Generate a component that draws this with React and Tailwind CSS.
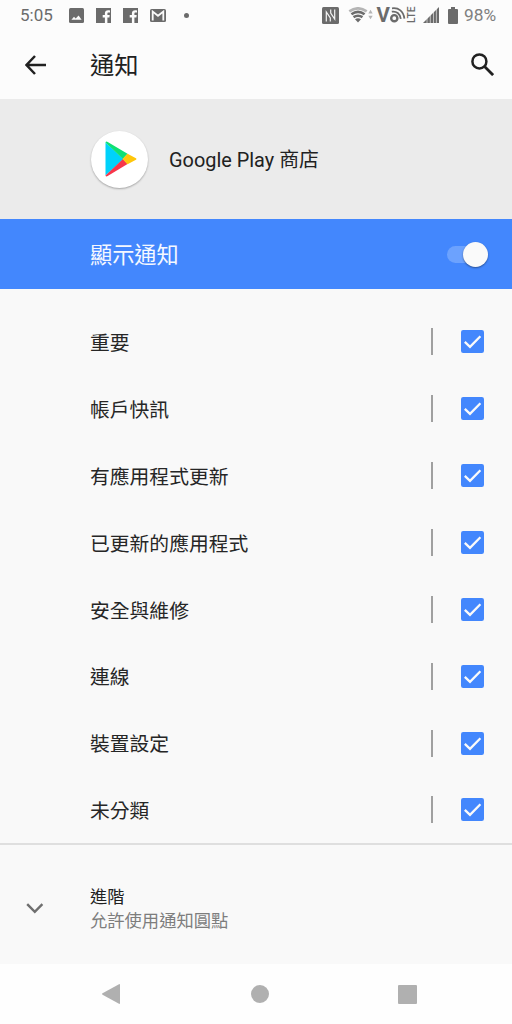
import React from 'react'

const channels = [
  '重要',
  '帳戶快訊',
  '有應用程式更新',
  '已更新的應用程式',
  '安全與維修',
  '連線',
  '裝置設定',
  '未分類',
]

function FacebookIcon() {
  return (
    <svg viewBox="0 0 15 15" className="w-[15px] h-[15px]">
      <path fill="#6b6b6b" d="M0 0h15v15h-3.6V9.4h2l.3-2.3h-2.3V5.7c0-.7.3-1.1 1.1-1.1H14V2.4c-.4-.1-1-.1-1.9-.1-1.9 0-3.2 1-3.2 2.9v1.9H6.7v2.3h2.2V15H0z" />
    </svg>
  )
}

function StatusBar() {
  return (
    <div className="flex h-[30px] items-center pl-5 pr-[15px] text-[17px] leading-none text-[#6b6b6b]">
      <span className="w-[34px] whitespace-nowrap pt-px">5:05</span>
      <svg viewBox="0 0 15 15" className="ml-[15px] w-[15px] h-[15px]">
        <rect width="15" height="15" rx="1.5" fill="#6b6b6b" />
        <path d="M2.4 11.8 5 8.8l1.7 1.8L9.6 7.4l3 4.4z" fill="#fafafa" />
      </svg>
      <div className="ml-3"><FacebookIcon /></div>
      <div className="ml-3"><FacebookIcon /></div>
      <svg viewBox="0 0 16 13" className="ml-3 w-4 h-[13px]">
        <rect width="16" height="13" rx="1.5" fill="#6b6b6b" />
        <path d="M2.7 11.5V2.6L8 6.8l5.3-4.2v8.9" fill="none" stroke="#fafafa" strokeWidth="1.8" />
      </svg>
      <div className="ml-[17.5px] size-[5px] rounded-full bg-[#6b6b6b]" />

      <div className="ml-auto flex items-center">
        {/* NFC */}
        <svg viewBox="0 0 17 17" className="w-[17px] h-[17px]">
          <rect width="17" height="17" rx="1.5" fill="#6b6b6b" />
          <path d="M4.3 14.5V5l4 6v3.5M12.7 2.5V12l-4-6V2.5" fill="none" stroke="#f4f4f4" strokeWidth="1.2" />
        </svg>
        {/* Wifi with traffic arrows */}
        <svg viewBox="0 0 26 16" className="ml-[9px] w-[26px] h-4">
          <path d="M1.3 4.4Q10 -1.8 18.7 4.4" fill="none" stroke="#b5b5b5" strokeWidth="2.6" />
          <path d="M3.4 7.3Q10 2.5 16.6 7.3M5.5 10.2Q10 7.2 14.5 10.2" fill="none" stroke="#6b6b6b" strokeWidth="2.6" />
          <path d="M10 15.5 7 12.2Q10 10.4 13 12.2z" fill="#6b6b6b" />
          <path d="M20.3 6.4 22.5 2.8l2.2 3.6zM20.3 8.7l2.2 3.6 2.2-3.6z" fill="#b5b5b5" />
        </svg>
        {/* VoLTE */}
        <svg viewBox="0 0 40 30" className="ml-[2px] w-10 h-[30px]">
          <text x=".5" y="21.7" fontSize="20.5" fontWeight="700" fill="#6b6b6b">V</text>
          <circle cx="18.3" cy="18.2" r="3.1" fill="none" stroke="#6b6b6b" strokeWidth="2.4" />
          <path d="M15.8 11.7c4.6-.9 8.3 2.1 9 7.2M16 8.3c6.6-1 11.6 3.2 12.4 10.3" fill="none" stroke="#6b6b6b" strokeWidth="1.8" />
          <text transform="translate(38.8 22.9) rotate(-90)" fontSize="10.2" fontWeight="500" textLength="16.5" lengthAdjust="spacingAndGlyphs" fill="#6b6b6b">LTE</text>
        </svg>
        {/* Signal strength */}
        <svg viewBox="0 0 16 16" className="ml-[7px] w-4 h-4">
          <path d="M16 0v16H0z" fill="#6b6b6b" />
          <path d="M4 9v7M7.3 6v10M10.5 3v13M13.4 0v16" stroke="#fafafa" strokeWidth=".6" />
        </svg>
        {/* Battery */}
        <svg viewBox="0 0 10 17" className="ml-[9px] w-[10px] h-[17px]">
          <path d="M3 0h4v2h2q1 0 1 1v13q0 1-1 1H1q-1 0-1-1V3q0-1 1-1h2z" fill="#6b6b6b" />
        </svg>
        <span className="ml-[6px] w-[33px] whitespace-nowrap pt-px text-[17.3px] text-[#808080]">98%</span>
      </div>
    </div>
  )
}

function PlayLogo() {
  return (
    <div className="flex size-[57px] items-center justify-center rounded-full bg-white pl-[3px] shadow-[0_1px_2px_rgba(0,0,0,0.3)]">
      <svg viewBox="0 0 32 36" className="w-8 h-9">
        <path d="M.5 1.5v33L18.5 18z" fill="#00d2fb" />
        <path d="M.5 1.5Q1 0 2.7 1L22.5 12.8 18 18z" fill="#0fe074" />
        <path d="M.5 34.5Q1 36 2.7 35L22.5 23 18 18z" fill="#f7364a" />
        <path d="M22.5 12.8 31 17.2q1 .8 0 1.6L22.5 23.2 17.5 18z" fill="#ffc60a" />
      </svg>
    </div>
  )
}

function ChannelRow({ name }) {
  return (
    <div className="flex h-[66.86px] items-center pl-[90px] pr-[28px] text-[19.8px] text-[#262626]">
      <span className="flex-1 pt-[4px]">{name}</span>
      <div className="h-[27px] w-[1.5px] bg-[#a0a0a0]" />
      <svg viewBox="0 0 23 23" className="ml-[28.5px] w-[23px] h-[23px]">
        <rect width="23" height="23" rx="2.2" fill="#4387fd" />
        <path d="M3.8 11.8 9 16.8 19.4 6.3" fill="none" stroke="#fafafa" strokeWidth="2.3" />
      </svg>
    </div>
  )
}

export default function App() {
  return (
    <div className="flex h-[1024px] w-[512px] flex-col overflow-hidden bg-[#f9f9f9] font-['Roboto','Noto_Sans_CJK_TC',sans-serif] text-[#212121]">
      {/* Top bar */}
      <header className="h-[99px] bg-[#fcfcfc]">
        <StatusBar />
        <div className="flex h-[69px] items-center pl-[25px] pr-[18px]">
          <svg viewBox="0 0 21 20" className="w-[21px] h-5">
            <path d="M10 1 1.5 10l8.5 9M1.5 10H21" fill="none" stroke="#212121" strokeWidth="2.5" />
          </svg>
          <h1 className="ml-11 flex-1 pt-[3px] text-[24.3px]">通知</h1>
          <svg viewBox="0 0 23 23" className="w-[23px] h-[23px]">
            <circle cx="8.4" cy="8.4" r="7" fill="none" stroke="#212121" strokeWidth="2.5" />
            <path d="m13.3 13.3 8.8 8.8" stroke="#212121" strokeWidth="2.8" />
          </svg>
        </div>
      </header>

      {/* App info */}
      <section className="flex h-[120px] items-center bg-[#ebebeb] pl-[91px] text-[19.9px]">
        <PlayLogo />
        <span className="ml-[21px] pt-[4px]">Google Play 商店</span>
      </section>

      {/* Master switch */}
      <section className="flex h-[70px] items-center bg-[#4387fd] pl-[90px] pr-6 text-[22.2px] text-[#f5f8ff]">
        <span className="flex-1 pt-[4px]">顯示通知</span>
        <div className="flex h-[17px] w-[41px] items-center justify-end rounded-full bg-[#6ca2fe]">
          <div className="size-[25px] shrink-0 rounded-full bg-[#fafafa] shadow-[0_1px_2px_rgba(0,0,0,0.4)]" />
        </div>
      </section>

      {/* Channels */}
      <section className="h-[556px] border-b-2 border-[#dfdfdf] pt-[19.5px]">
        {channels.map((name) => (
          <ChannelRow key={name} name={name} />
        ))}
      </section>

      {/* Advanced */}
      <section className="flex h-[119px] items-center pl-[26px] pt-[8px]">
        <svg viewBox="0 0 18 11" className="w-[18px] h-[11px]">
          <path d="m1.2 1.2 7.6 7.6 7.6-7.6" fill="none" stroke="#6f6f6f" strokeWidth="2.4" />
        </svg>
        <div className="ml-[46px] pt-[2px] text-[17.3px] leading-[23.5px]">
          <p>進階</p>
          <p className="text-[#7d7d7d]">允許使用通知圓點</p>
        </div>
      </section>

      {/* Navigation buttons */}
      <nav className="flex h-[60px] items-center bg-[#fefefe] pl-[102px]">
        <svg viewBox="0 0 18 20" className="w-[18px] h-5">
          <path d="M17 .2q1-.4 1 .8v18q0 1.2-1 .8L.5 10.7q-.8-.7 0-1.4z" fill="#b0b0b0" />
        </svg>
        <div className="ml-[130.5px] size-[18px] rounded-full bg-[#b0b0b0]" />
        <div className="ml-[129.5px] size-[19px] rounded-[1px] bg-[#b0b0b0]" />
      </nav>
    </div>
  )
}
